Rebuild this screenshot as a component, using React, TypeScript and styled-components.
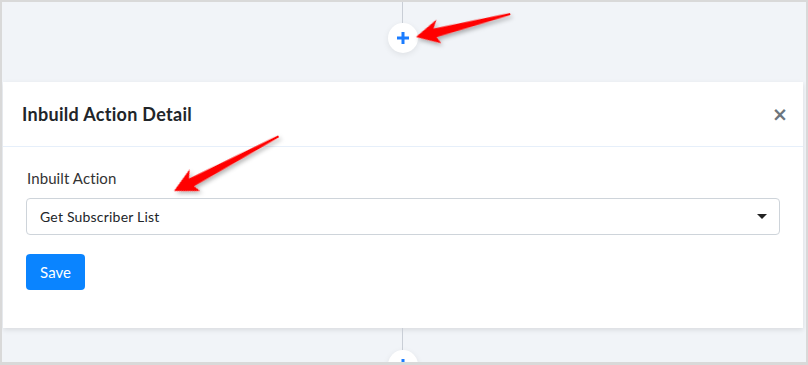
import React from "react";
import styled, { createGlobalStyle } from "styled-components";

const Global = createGlobalStyle`
  html, body { margin: 0; padding: 0; background: #fff; }
  body { font-family: Lato, "Noto Sans", sans-serif; }
  * { box-sizing: border-box; }
`;

const Frame = styled.div`
  position: relative;
  width: 808px;
  height: 365px;
  border: 2px solid #d9d9d9;
  border-bottom-width: 3px;
  background: #f1f4f8;
  overflow: hidden;
  display: flex;
  flex-direction: column;
`;

const Connector = styled.div<{ $h: number }>`
  width: 1px;
  height: ${(p) => p.$h}px;
  background: #c9ced6;
  margin-left: 400px;
  flex-shrink: 0;
`;

const AddButton = styled.div`
  width: 30px;
  height: 30px;
  border-radius: 50%;
  background: #fff;
  margin-left: 386px;
  display: flex;
  align-items: center;
  justify-content: center;
  box-shadow: 0 2px 6px rgba(0, 0, 0, 0.08);
  flex-shrink: 0;
`;

const TopZone = styled.div`
  height: 80px;
  display: flex;
  flex-direction: column;
  flex-shrink: 0;
`;

const Card = styled.div`
  margin: 0 3px 0 1px;
  background: #fff;
  box-shadow: 0 2px 5px rgba(0, 0, 0, 0.1);
  flex-shrink: 0;
`;

const CardHeader = styled.div`
  height: 65px;
  display: flex;
  align-items: center;
  justify-content: space-between;
  padding: 0 15px 0 19px;
  border-bottom: 1px solid #e6effa;
`;

const Title = styled.h2`
  margin: 0;
  font-size: 18px;
  font-weight: 700;
  color: #212529;
  letter-spacing: 0.3px;
`;

const Close = styled.span`
  font-size: 19px;
  font-weight: 700;
  color: #6c757d;
  line-height: 1;
  font-family: "DejaVu Sans", sans-serif;
`;

const CardBody = styled.div`
  padding: 20px 23px 38px 23px;
`;

const Label = styled.div`
  font-size: 15px;
  color: #333;
  line-height: 22px;
  margin-left: 1px;
  margin-bottom: 9px;
  letter-spacing: 0.1px;
`;

const Select = styled.div`
  height: 37px;
  border: 1px solid #ced4da;
  border-radius: 4px;
  display: flex;
  align-items: center;
  justify-content: space-between;
  padding: 0 12px 0 13px;
  font-size: 14px;
  letter-spacing: 0.2px;
  color: #212529;
`;

const Caret = styled.span`
  width: 0;
  height: 0;
  border-left: 5px solid transparent;
  border-right: 5px solid transparent;
  border-top: 5px solid #222;
`;

const SaveButton = styled.button`
  margin-top: 19px;
  height: 36px;
  width: 59px;
  border: none;
  border-radius: 4px;
  background: #0a84ff;
  color: #fff;
  font-family: Lato, "Noto Sans", sans-serif;
  font-size: 15px;
  padding: 0;
`;

const BottomZone = styled.div`
  display: flex;
  flex-direction: column;
`;

const Overlay = styled.svg`
  position: absolute;
  left: -2px;
  top: -2px;
  pointer-events: none;
`;

const Plus = () => (
  <svg width="14" height="14" viewBox="0 0 14 14">
    <path d="M7 1v12M1 7h12" stroke="#1a7cff" strokeWidth="3" />
  </svg>
);

const arrowPath = (L: number) =>
  `M0 0 L24 -12 L19 -4 L${L} -1 L${L} 1 L20 5 L23 12 Z`;

export default function App() {
  return (
    <>
      <Global />
      <Frame>
        <TopZone>
          <Connector $h={21} />
          <AddButton>
            <Plus />
          </AddButton>
        </TopZone>
        <Card>
          <CardHeader>
            <Title>Inbuild Action Detail</Title>
            <Close>×</Close>
          </CardHeader>
          <CardBody>
            <Label>Inbuilt Action</Label>
            <Select>
              <span>Get Subscriber List</span>
              <Caret />
            </Select>
            <SaveButton>Save</SaveButton>
          </CardBody>
        </Card>
        <BottomZone>
          <Connector $h={22} />
          <AddButton>
            <Plus />
          </AddButton>
        </BottomZone>
        <Overlay width="808" height="365" viewBox="0 0 808 365">
          <defs>
            <filter id="sh" x="-20%" y="-50%" width="140%" height="200%">
              <feDropShadow dx="1" dy="3" stdDeviation="2" floodColor="#000" floodOpacity="0.3" />
            </filter>
          </defs>
          <g transform="translate(416 37) rotate(-13.7)" filter="url(#sh)">
            <path d={arrowPath(97)} fill="#ff0000" />
          </g>
          <g transform="translate(174 191) rotate(-27.6)" filter="url(#sh)">
            <path d={arrowPath(118)} fill="#ff0000" />
          </g>
        </Overlay>
      </Frame>
    </>
  );
}
